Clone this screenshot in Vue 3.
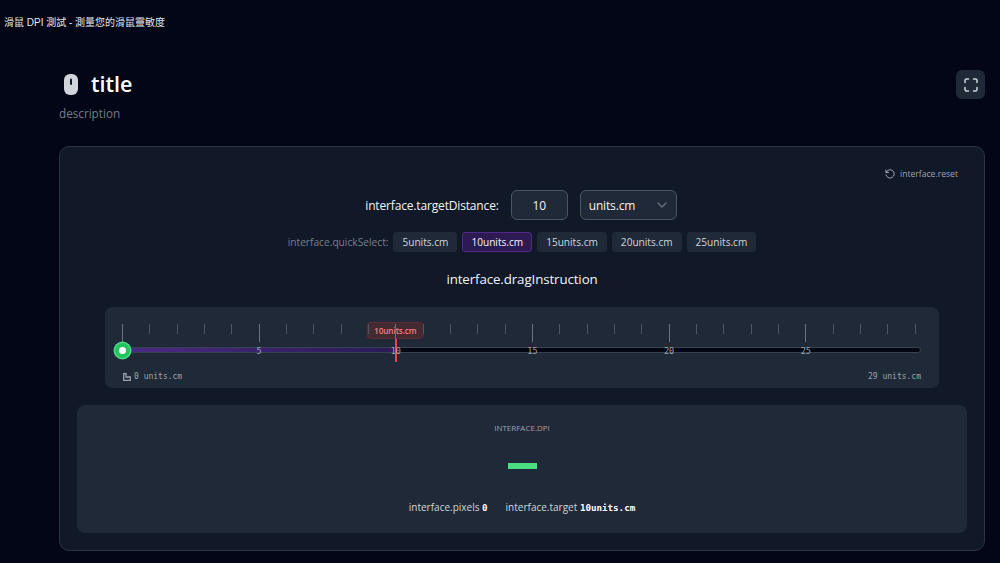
<script setup>
const unit = 27.33
const ticks = Array.from({ length: 30 }, (_, i) => i)
const labels = [5, 10, 15, 20, 25]
const quick = [5, 10, 15, 20, 25]
</script>

<template>
  <div class="page">
    <div class="doc-title">滑鼠 DPI 測試 - 測量您的滑鼠靈敏度</div>
    <main class="wrap">
      <header class="head">
        <div>
          <h1 class="title">
            <svg class="mouse" width="14" height="21" viewBox="0 0 14 21">
              <rect x="0" y="0" width="14" height="21" rx="6" fill="#d1d5db" />
              <rect x="6" y="4.500" width="2" height="6.500" rx="1" fill="#111827" />
            </svg>
            title
          </h1>
          <p class="desc">description</p>
        </div>
        <button class="fs">
          <svg width="14" height="14" viewBox="0 0 14 14" fill="none" stroke="#d1d5db" stroke-width="1.500" stroke-linecap="round">
            <path d="M1 4.500V2.500A1.500 1.500 0 0 1 2.500 1H4.500M9.500 1H11.500A1.500 1.500 0 0 1 13 2.500V4.500M13 9.500V11.500A1.500 1.500 0 0 1 11.500 13H9.500M4.500 13H2.500A1.500 1.500 0 0 1 1 11.500V9.500" />
          </svg>
        </button>
      </header>

      <section class="card">
        <div class="reset-row">
          <span class="reset">
            <svg width="10" height="10" viewBox="0 0 10 10" fill="none" stroke="#9ca3af" stroke-width="1" stroke-linecap="round" stroke-linejoin="round">
              <path d="M1.100 3.300A4.200 4.200 0 1 1 0.900 5.800" />
              <path d="M0.900 1V3.500H3.400" />
            </svg>
            interface.reset
          </span>
        </div>

        <div class="target-row">
          <span class="target-label">interface.targetDistance:</span>
          <span class="num-box">10</span>
          <span class="select">
            units.cm
            <svg width="10" height="6" viewBox="0 0 10 6" fill="none" stroke="#6b7280" stroke-width="1.200" stroke-linecap="round" stroke-linejoin="round">
              <path d="M1 1L5 5L9 1" />
            </svg>
          </span>
        </div>

        <div class="quick-row">
          <span class="quick-label">interface.quickSelect:</span>
          <span v-for="q in quick" :key="q" class="chip" :class="{ active: q === 10 }">{{ q }}units.cm</span>
        </div>

        <p class="instruction">interface.dragInstruction</p>

        <div class="ruler">
          <div class="scale">
            <div class="track">
              <div class="fill"></div>
            </div>
            <span class="marker" :style="{ left: 10 * unit + 'px' }"></span>
            <span class="flag" :style="{ left: 10 * unit + 'px' }">10units.cm</span>
            <span
              v-for="t in ticks"
              :key="t"
              class="tick"
              :class="{ major: t % 5 === 0 }"
              :style="{ left: t * unit + 'px' }"
            ></span>
            <span
              v-for="l in labels"
              :key="l"
              class="num"
              :style="{ left: l * unit + 'px' }"
            >{{ l }}</span>
            <span class="handle"></span>
          </div>
          <div class="ruler-foot">
            <span class="foot-left">
              <svg width="8" height="8" viewBox="0 0 8 8" fill="none" stroke="#9ca3af" stroke-width="1.300">
                <path d="M0.700 0.700H3V4H7.300V7.300H0.700Z" />
              </svg>
              0 units.cm
            </span>
            <span>29 units.cm</span>
          </div>
        </div>

        <div class="result">
          <div class="dpi-label">INTERFACE.DPI</div>
          <div class="dpi-dash"></div>
          <div class="stats">
            <span>interface.pixels <b>0</b></span>
            <span>interface.target <b>10units.cm</b></span>
          </div>
        </div>
      </section>
    </main>
  </div>
</template>

<style scoped>
.page {
  height: 563px;
  box-sizing: border-box;
  overflow: hidden;
  font-family: "Open Sans", "Noto Sans CJK TC", sans-serif;
  color: #fff;
}
.doc-title {
  padding: 16px 0 0 4px;
  height: 14px;
  font-family: "Liberation Sans", "Noto Sans CJK TC", sans-serif;
  font-size: 10px;
  line-height: 14px;
  color: #e5e7eb;
}
.wrap {
  padding: 40px 15px 0 59px;
}
.head {
  display: flex;
  justify-content: space-between;
  align-items: flex-start;
  height: 76px;
}
.title {
  display: flex;
  align-items: center;
  gap: 13px;
  margin: -1px 0 1px;
  padding-left: 5px;
  height: 30px;
  font-size: 21.500px;
  font-weight: 600;
  line-height: 30px;
}
.mouse {
  flex-shrink: 0;
}
.desc {
  margin: 5px 0 0;
  font-size: 11.700px;
  line-height: 18px;
  color: #747c8a;
}
.fs {
  display: flex;
  align-items: center;
  justify-content: center;
  width: 29px;
  height: 29px;
  padding: 0;
  border: 0;
  border-radius: 6px;
  background: #1f2937;
}
.card {
  box-sizing: border-box;
  width: 926px;
  height: 405px;
  padding: 20px 17px 17px;
  border: 1px solid #2b3544;
  border-radius: 10px;
  background: #111827;
}
.reset-row {
  display: flex;
  justify-content: flex-end;
  padding-right: 9px;
  height: 14px;
}
.reset {
  display: flex;
  align-items: center;
  gap: 5px;
  font-size: 8.600px;
  line-height: 14px;
  color: #9ca3af;
}
.target-row {
  display: flex;
  justify-content: center;
  align-items: center;
  gap: 12px;
  margin-top: 9px;
  padding-right: 2px;
  height: 30px;
}
.target-label {
  font-size: 12px;
  letter-spacing: -0.160px;
  color: #f3f4f6;
}
.num-box,
.select {
  box-sizing: border-box;
  display: flex;
  align-items: center;
  height: 30px;
  border: 1px solid #4b5563;
  border-radius: 6px;
  background: #1f2937;
  font-size: 12px;
  letter-spacing: -0.160px;
  color: #f3f4f6;
}
.num-box {
  justify-content: center;
  width: 57px;
}
.select {
  justify-content: space-between;
  width: 97px;
  padding: 0 9px 0 8px;
}
.quick-row {
  display: flex;
  justify-content: center;
  align-items: center;
  gap: 5px;
  margin-top: 12px;
  height: 20px;
}
.quick-label {
  font-size: 10.200px;
  color: #78808e;
}
.chip {
  box-sizing: border-box;
  display: flex;
  align-items: center;
  height: 20px;
  padding: 0 8px;
  border: 1px solid #1f2937;
  border-radius: 3px;
  background: #1f2937;
  font-size: 10.100px;
  color: #d1d5db;
}
.chip.active {
  border-color: #4c2a85;
  background: #2e1a52;
  color: #f3f4f6;
}
.instruction {
  margin: 17px 0 0;
  height: 20px;
  text-align: center;
  font-size: 13.300px;
  line-height: 20px;
  letter-spacing: -0.100px;
  color: #f3f4f6;
}
.ruler {
  box-sizing: border-box;
  width: 834px;
  height: 81px;
  margin: 18px 0 0 28px;
  padding: 17px 17px 0;
  border-radius: 7px;
  background: #1f2937;
}
.scale {
  position: relative;
  height: 37px;
}
.tick {
  position: absolute;
  top: 0;
  width: 1px;
  height: 10px;
  background: #4b5563;
}
.tick.major {
  height: 18px;
  background: #6b7280;
}
.track {
  position: absolute;
  top: 23px;
  left: 0;
  box-sizing: border-box;
  width: 799px;
  height: 6px;
  border: 1px solid #374151;
  border-radius: 3px;
  background: #030712;
  overflow: hidden;
}
.fill {
  height: 100%;
  width: 34.200%;
  background: linear-gradient(90deg, #4c2a85, #2a1a55);
}
.num {
  position: absolute;
  top: 22px;
  transform: translateX(-50%);
  margin-left: 0.500px;
  font-family: "DejaVu Sans Mono", monospace;
  font-size: 8.500px;
  line-height: 11px;
  color: #9ca3af;
}
.handle {
  position: absolute;
  top: 18.500px;
  left: -7px;
  box-sizing: border-box;
  width: 15px;
  height: 15px;
  border: 4.500px solid #22c55e;
  border-radius: 50%;
  background: #fff;
  box-shadow: 0 0 0 1.500px #4ade80;
}
.marker {
  position: absolute;
  top: 10px;
  width: 1.500px;
  height: 28px;
  background: #ef4444;
}
.flag {
  position: absolute;
  top: -2px;
  transform: translateX(-50%);
  box-sizing: border-box;
  height: 17px;
  padding: 0 6px;
  border: 1px solid #5d2d34;
  border-radius: 4px;
  background: #432a30;
  font-size: 8.200px;
  font-weight: 600;
  letter-spacing: -0.100px;
  line-height: 15px;
  white-space: nowrap;
  color: #fb7f7f;
}
.ruler-foot {
  display: flex;
  justify-content: space-between;
  margin-top: 10px;
  width: 799px;
  font-family: "DejaVu Sans Mono", monospace;
  font-size: 8px;
  line-height: 12px;
  color: #9ca3af;
}
.foot-left {
  display: flex;
  align-items: center;
  gap: 3px;
  padding-left: 1px;
}
.result {
  box-sizing: border-box;
  width: 890px;
  height: 128px;
  margin: 17px 0 0;
  padding-top: 17px;
  border-radius: 8px;
  background: #1f2937;
  text-align: center;
}
.dpi-label {
  font-size: 8px;
  line-height: 12px;
  color: #9ca3af;
}
.dpi-dash {
  width: 29px;
  height: 5.500px;
  margin: 29px auto 0;
  background: #4ade80;
}
.stats {
  display: flex;
  justify-content: center;
  gap: 18px;
  margin-top: 31px;
  font-size: 10px;
  line-height: 14px;
  color: #d1d5db;
}
.stats b {
  font-family: "DejaVu Sans Mono", monospace;
  font-size: 9.200px;
  color: #fff;
}
</style>

<style>
html, body {
  margin: 0;
  background: #020617;
}
</style>
